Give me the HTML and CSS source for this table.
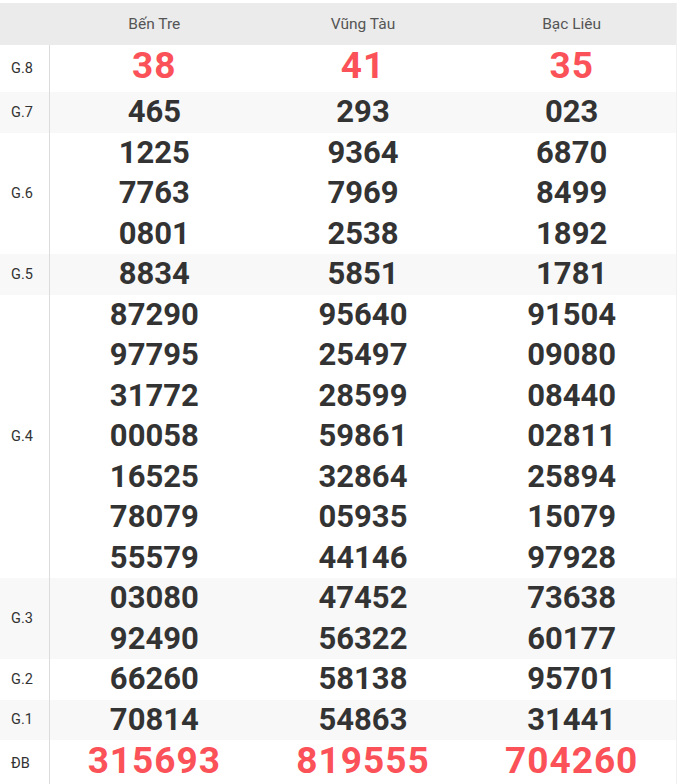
FILE: index.html
```html
<!DOCTYPE html>
<html lang="vi">
<head>
<meta charset="utf-8">
<link rel="stylesheet" href="styles.css">
</head>
<body>
<div class="table">
  <div class="row head">
    <div class="label"></div>
    <div class="cell">Bến Tre</div>
    <div class="cell">Vũng Tàu</div>
    <div class="cell">Bạc Liêu</div>
  </div>
  <div class="row prize big">
    <div class="label">G.8</div>
    <div class="cell"><span>38</span></div>
    <div class="cell"><span>41</span></div>
    <div class="cell"><span>35</span></div>
  </div>
  <div class="row prize alt">
    <div class="label">G.7</div>
    <div class="cell"><span>465</span></div>
    <div class="cell"><span>293</span></div>
    <div class="cell"><span>023</span></div>
  </div>
  <div class="row prize">
    <div class="label">G.6</div>
    <div class="cell"><span>1225</span><span>7763</span><span>0801</span></div>
    <div class="cell"><span>9364</span><span>7969</span><span>2538</span></div>
    <div class="cell"><span>6870</span><span>8499</span><span>1892</span></div>
  </div>
  <div class="row prize alt">
    <div class="label">G.5</div>
    <div class="cell"><span>8834</span></div>
    <div class="cell"><span>5851</span></div>
    <div class="cell"><span>1781</span></div>
  </div>
  <div class="row prize">
    <div class="label">G.4</div>
    <div class="cell"><span>87290</span><span>97795</span><span>31772</span><span>00058</span><span>16525</span><span>78079</span><span>55579</span></div>
    <div class="cell"><span>95640</span><span>25497</span><span>28599</span><span>59861</span><span>32864</span><span>05935</span><span>44146</span></div>
    <div class="cell"><span>91504</span><span>09080</span><span>08440</span><span>02811</span><span>25894</span><span>15079</span><span>97928</span></div>
  </div>
  <div class="row prize alt">
    <div class="label">G.3</div>
    <div class="cell"><span>03080</span><span>92490</span></div>
    <div class="cell"><span>47452</span><span>56322</span></div>
    <div class="cell"><span>73638</span><span>60177</span></div>
  </div>
  <div class="row prize">
    <div class="label">G.2</div>
    <div class="cell"><span>66260</span></div>
    <div class="cell"><span>58138</span></div>
    <div class="cell"><span>95701</span></div>
  </div>
  <div class="row prize alt">
    <div class="label">G.1</div>
    <div class="cell"><span>70814</span></div>
    <div class="cell"><span>54863</span></div>
    <div class="cell"><span>31441</span></div>
  </div>
  <div class="row prize big">
    <div class="label">ĐB</div>
    <div class="cell"><span>315693</span></div>
    <div class="cell"><span>819555</span></div>
    <div class="cell"><span>704260</span></div>
  </div>
</div>
</body>
</html>
```
FILE: styles.css
```css
html, body {
  margin: 0;
  padding: 0;
  background: #fff;
}
body {
  font-family: Roboto, "Liberation Sans", sans-serif;
  padding-top: 3px;
}
.table {
  width: 676px;
  border-right: 1px solid #f0f0f0;
}
.row {
  display: grid;
  grid-template-columns: 50px 1fr 1fr 1fr;
}
.head {
  background: #ebebeb;
  height: 42px;
  align-items: center;
}
.head .cell {
  text-align: center;
  font-size: 15.5px;
  color: #555;
}
.label {
  box-sizing: border-box;
  border-right: 1px solid #dcdcdc;
  display: flex;
  align-items: center;
  padding-left: 11px;
  font-size: 14.5px;
  color: #333;
}
.head .label {
  border-right: none;
}
.alt {
  background: #f8f8f8;
}
.prize .cell {
  display: flex;
  flex-direction: column;
  align-items: center;
}
.prize .cell span {
  font-size: 31px;
  font-weight: 700;
  color: #333;
  line-height: 40.5px;
}
.big .cell span {
  font-size: 37px;
  color: #fb5158;
  letter-spacing: 1px;
  line-height: 41px;
  padding-bottom: 6px;
}
```
